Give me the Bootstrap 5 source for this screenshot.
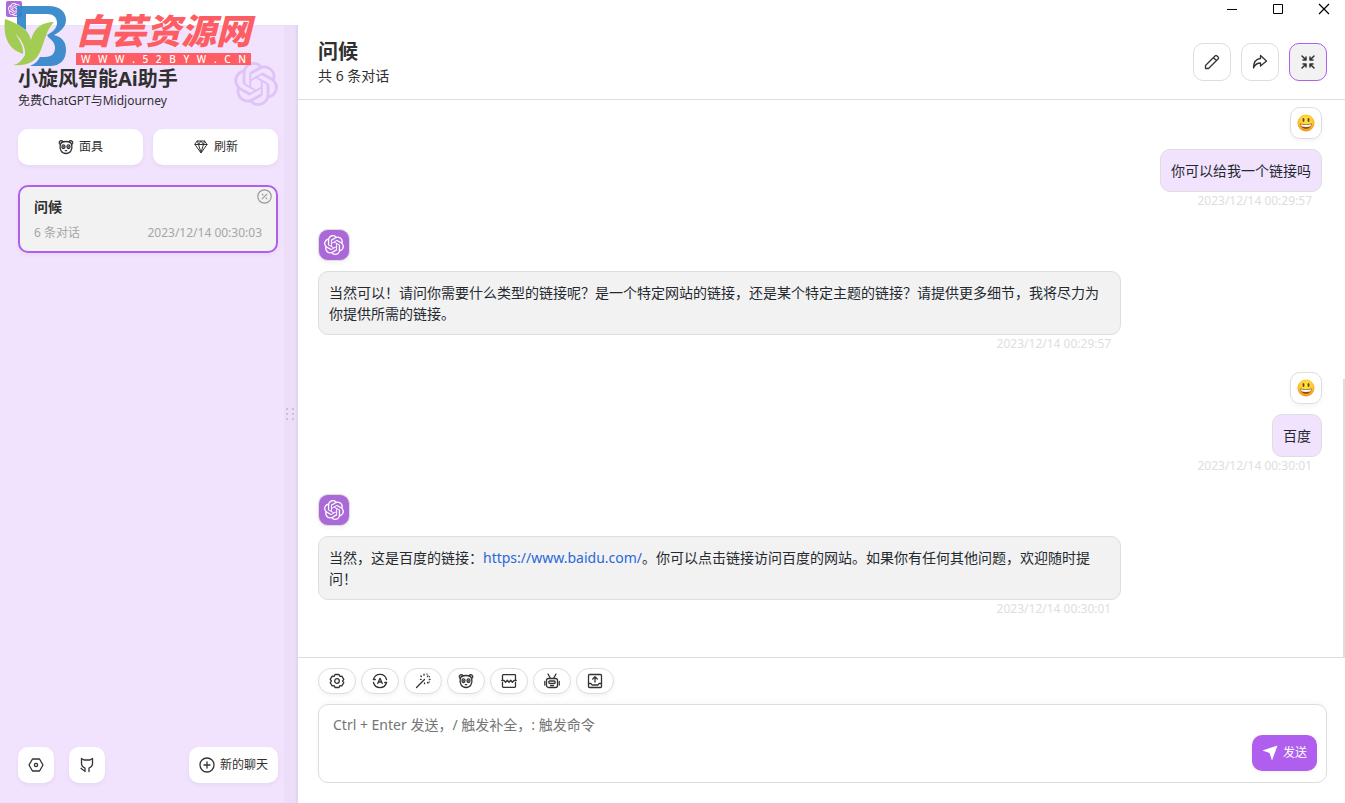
<!DOCTYPE html>
<html lang="zh-CN">
<head>
<meta charset="utf-8">
<meta name="viewport" content="width=device-width, initial-scale=1">
<title>小旋风智能Ai助手</title>
<link rel="stylesheet" href="https://cdn.jsdelivr.net/npm/bootstrap@5.3.0/dist/css/bootstrap.min.css">
<style>
:root{--brand:#af5eee;--soft:#f1e3fe;--line:#dedede;--ink:#303030}
body{font-family:"Noto Sans","Noto Sans CJK SC",sans-serif;font-size:14px;line-height:21px;color:var(--ink);background:#fff}
svg{display:block;flex:none}
.ico{width:16px;height:16px;fill:none;stroke:#333;stroke-width:1.3;stroke-linecap:round;stroke-linejoin:round}
.logo-shape{fill:currentColor}
/* window bar */
.titlebar{height:25px;padding-right:13px;gap:30px}
.titlebar button{width:16px;height:16px;color:#000}
.app-icon{width:16px;height:16px;left:6px;top:1px;background:#ab6bd9;border-radius:2px;color:#fff}
/* brand overlay */
.brand-mark{left:4px;top:5px;z-index:5;pointer-events:none}
.brand-name{font-family:"Noto Sans CJK SC",sans-serif;font-weight:900;font-style:italic;font-size:35px;line-height:48px;color:#fd5d63}
.brand-site{background:#fd5d63;color:#fff;font-size:10px;line-height:12px;font-weight:500;padding:0 5px}
/* sidebar */
.side{width:298px;padding:40px 20px 20px 18px;background:var(--soft);box-shadow:inset -2px 0 2px rgba(0,0,0,.05)}
.side-title{font-size:20px;line-height:28px;font-weight:700}
.side-sub{font-size:12px;line-height:16px}
.side-head{height:64px}
.side-logo{width:44px;height:44px;margin-top:-3px;color:#dfc3f7}
.side-duo{gap:10px}
.side-foot{gap:15px}
.soft-btn{--bs-btn-padding-x:10px;--bs-btn-padding-y:0;--bs-btn-bg:#fff;--bs-btn-color:#303030;--bs-btn-font-size:12px;--bs-btn-border-width:0;--bs-btn-border-radius:10px;--bs-btn-hover-bg:#f8f8f8;height:36px;box-shadow:0 2px 4px rgba(0,0,0,.05);gap:5px}
.soft-sq{width:36px}
.chat-item{height:68px;padding:9px 14px;border:2px solid var(--brand);border-radius:10px;background:#f2f2f2;box-shadow:0 2px 4px rgba(0,0,0,.05);margin-top:20px}
.chat-item .meta{font-size:12px;line-height:18px;color:#a6a6a6;margin-top:7px}
.close-x{right:4px;top:2px}
.grip{right:0;top:0;bottom:0;width:14px;background:rgba(0,0,0,.02)}
/* main */
.head{padding:0 18px 0 20px;height:75px;border-bottom:1px solid var(--line)}
.head h2{font-size:20px;line-height:26px;font-weight:700}
.head-tools{gap:10px}
.line-btn{--bs-btn-padding-x:0;--bs-btn-padding-y:0;--bs-btn-bg:#fff;--bs-btn-border-color:#dedede;--bs-btn-border-radius:10px;--bs-btn-hover-bg:#f3f3f3;width:38px;height:38px}
.line-btn.on{--bs-btn-bg:#f2f2f2;--bs-btn-border-color:var(--brand)}
.pill{--bs-btn-border-radius:20px;height:26px;box-shadow:0 2px 4px rgba(0,0,0,.05)}
.feed{padding:0 23px 20px 20px}
.face{width:32px;height:32px;border:1px solid var(--line);border-radius:10px;box-shadow:0 2px 4px rgba(0,0,0,.05);margin-bottom:10px}
.face.bot{background:#ab68d8;color:#fff}
.speech{max-width:80%}
.bubble{padding:10px;border:1px solid var(--line);border-radius:10px;background:#f2f2f2;color:#24292f}
.mine .bubble{background:var(--soft)}
.mine .speech{display:flex;flex-direction:column;align-items:flex-end}
.bubble a{color:#2a67d8;text-decoration:none}
.stamp{font-size:12px;line-height:17px;color:#dedede;padding-right:10px;margin-bottom:20px;text-align:right}
.thumb{right:0;bottom:0;width:2px;height:50%;background:#dedede}
.composer{padding:10px 18px 20px 20px;border-top:1px solid var(--line)}
.tools{gap:5px;margin-bottom:10px}
.ask{height:79px;padding:9px 90px 9px 14px;border:1px solid var(--line);border-radius:10px;resize:none;font-size:14px;line-height:21px;box-shadow:0 -2px 5px rgba(0,0,0,.03)}
.ask::placeholder{color:#757575}
.send{--bs-btn-bg:#af5eee;--bs-btn-color:#fff;--bs-btn-hover-bg:#9d4bdd;--bs-btn-hover-color:#fff;right:10px;bottom:12px}
</style>
</head>
<body class="vh-100 d-flex flex-column overflow-hidden">
<svg width="0" height="0" class="position-absolute" aria-hidden="true">
<symbol id="knot" viewBox="0 0 24 24"><path class="logo-shape" d="M22.2819 9.8211a5.9847 5.9847 0 0 0-.5157-4.9108 6.0462 6.0462 0 0 0-6.5098-2.9A6.0651 6.0651 0 0 0 4.9807 4.1818a5.9847 5.9847 0 0 0-3.9977 2.9 6.0462 6.0462 0 0 0 .7427 7.0966 5.98 5.98 0 0 0 .511 4.9107 6.051 6.051 0 0 0 6.5146 2.9001A5.9847 5.9847 0 0 0 13.2599 24a6.0557 6.0557 0 0 0 5.7718-4.2058 5.9894 5.9894 0 0 0 3.9977-2.9001 6.0557 6.0557 0 0 0-.7475-7.0729zm-9.022 12.6081a4.4755 4.4755 0 0 1-2.8764-1.0408l.1419-.0804 4.7783-2.7582a.7948.7948 0 0 0 .3927-.6813v-6.7369l2.02 1.1686a.071.071 0 0 1 .038.052v5.5826a4.504 4.504 0 0 1-4.4945 4.4944zm-9.6607-4.1254a4.4708 4.4708 0 0 1-.5346-3.0137l.142.0852 4.783 2.7582a.7712.7712 0 0 0 .7806 0l5.8428-3.3685v2.3324a.0804.0804 0 0 1-.0332.0615L9.74 19.9502a4.4992 4.4992 0 0 1-6.1408-1.6464zM2.3408 7.8956a4.485 4.485 0 0 1 2.3655-1.9728V11.6a.7664.7664 0 0 0 .3879.6765l5.8144 3.3543-2.0201 1.1685a.0757.0757 0 0 1-.071 0l-4.8303-2.7865A4.504 4.504 0 0 1 2.3408 7.872zm16.5963 3.8558L13.1038 8.364 15.1192 7.2a.0757.0757 0 0 1 .071 0l4.8303 2.7913a4.4944 4.4944 0 0 1-.6765 8.1042v-5.6772a.79.79 0 0 0-.407-.667zm2.0107-3.0231l-.142-.0852-4.7735-2.7818a.7759.7759 0 0 0-.7854 0L9.409 9.2297V6.8974a.0662.0662 0 0 1 .0284-.0615l4.8303-2.7866a4.4992 4.4992 0 0 1 6.6802 4.66zM8.3065 12.863l-2.02-1.1638a.0804.0804 0 0 1-.038-.0567V6.0742a4.4992 4.4992 0 0 1 7.3757-3.4537l-.142.0805L8.704 5.459a.7948.7948 0 0 0-.3927.6813zm1.0976-2.3654l2.602-1.4998 2.6069 1.4998v2.9994l-2.5974 1.4997-2.6067-1.4997Z"/></symbol>
<symbol id="mask" viewBox="0 0 16 16"><path d="M5 2.600C3.600.8.7 1.800 1.300 4.400c.2.700.7 1.100 1.200 1.200M11 2.600c1.400-1.800 4.300-.8 3.700 1.800-.2.700-.7 1.100-1.200 1.200M2.300 5.500C2.800 3.500 5 2.500 8 2.500s5.200 1 5.700 3c.5 2.500.3 4.500-.7 6.200-1 1.900-2.700 2.800-5 2.800s-4-.9-5-2.800c-1-1.700-1.200-3.700-.7-6.200z"/><ellipse cx="5.500" cy="7.700" rx="1.500" ry="1.800"/><ellipse cx="10.500" cy="7.700" rx="1.500" ry="1.800"/><path d="M5.600 7.700v.2M10.400 7.700v.2M7.300 11.600h1.400"/></symbol>
<symbol id="smile" viewBox="0 0 18 18"><radialGradient id="sun" cx=".5" cy=".35" r=".65"><stop offset="0" stop-color="#ffe94f"/><stop offset=".65" stop-color="#fdc52c"/><stop offset="1" stop-color="#ec8a18"/></radialGradient><circle cx="9" cy="9" r="8.500" fill="url(#sun)"/><ellipse cx="6.500" cy="5.900" rx="1" ry="2" fill="#67400d"/><ellipse cx="11.500" cy="5.900" rx="1" ry="2" fill="#67400d"/><path d="M3.200 9.500c3.800.9 7.800.9 11.600 0-.3 3.500-2.700 5.300-5.800 5.300s-5.500-1.800-5.800-5.300z" fill="#8a4d12"/><path d="M3.800 10.200c3.500.7 6.900.7 10.400 0-.2 1-.5 1.700-1 2.300-2.800.5-5.600.5-8.400 0-.5-.6-.8-1.300-1-2.300z" fill="#fff"/></symbol>
</svg>

<header class="titlebar d-flex align-items-start justify-content-end position-relative flex-shrink-0">
  <span class="app-icon position-absolute d-flex align-items-center justify-content-center"><svg width="13" height="13"><use href="#knot"/></svg></span>
  <button class="btn p-0 border-0" aria-label="最小化"><svg width="16" height="18" stroke="#000"><path d="M3 9.500h10"/></svg></button>
  <button class="btn p-0 border-0" aria-label="最大化"><svg width="16" height="18" fill="none" stroke="#000"><path d="M3.500 4.500h9v9h-9z"/></svg></button>
  <button class="btn p-0 border-0" aria-label="关闭"><svg width="16" height="18" stroke="#000" stroke-width="1.200"><path d="M3 4l10 10M13 4L3 14"/></svg></button>
</header>

<div class="brand-mark position-absolute d-flex">
  <svg width="72" height="62" viewBox="0 0 72 62"><path fill="#2c82c6" fill-opacity=".9" d="M13 1H44C56 1 62 7 62 15C62 22 56 27 50 30C58 32 62 37 62 45C62 55 56 61 46 61H26C31 59 34 56 36 52H41C48 52 51 48 51 43C51 38 48 35 45 33L43 30C49 27 53 23 53 18C53 12 49 9 43 9H22V25L13 19Z"/><path fill="#a3cd52" d="M1 14C14 19 24 23 27 35C30 23 38 17 50 17C42 25 41 36 36 47C31 58 22 61 9 60C15 59 18 55 21 50C22 42 17 34 11 28C16 36 20 42 19 49C3 44-1 30 1 14Z"/></svg>
  <div>
    <div class="brand-name">白芸资源网</div>
    <div class="brand-site d-flex justify-content-between"><span>W</span><span>W</span><span>W</span><span>.</span><span>5</span><span>2</span><span>B</span><span>Y</span><span>W</span><span>.</span><span>C</span><span>N</span></div>
  </div>
</div>

<div class="d-flex flex-grow-1 overflow-hidden">
  <aside class="side position-relative d-flex flex-column flex-shrink-0">
    <div class="side-head d-flex justify-content-between">
      <div>
        <h1 class="side-title mb-0">小旋风智能Ai助手</h1>
        <div class="side-sub">免费ChatGPT与Midjourney</div>
      </div>
      <svg class="side-logo"><use href="#knot"/></svg>
    </div>
    <div class="side-duo d-flex">
      <button class="btn soft-btn flex-fill d-flex align-items-center justify-content-center"><svg class="ico"><use href="#mask"/></svg>面具</button>
      <button class="btn soft-btn flex-fill d-flex align-items-center justify-content-center"><svg class="ico" viewBox="0 0 16 16"><path stroke-width="1" d="M4.500 2h7L14 5.500 8 14 2 5.500zM2 5.500h12M5.500 5.500L8 13.500l2.500-8M4.500 2l1 3.500L8 2l2.500 3.500 1-3.500"/></svg>刷新</button>
    </div>
    <div class="chat-item position-relative">
      <div class="fw-bold">问候</div>
      <div class="meta d-flex justify-content-between"><span>6 条对话</span><span>2023/12/14 00:30:03</span></div>
      <button class="close-x btn p-0 border-0 position-absolute" aria-label="删除"><svg width="15" height="15" fill="none" stroke="#999" stroke-width="1.200"><circle cx="7.500" cy="7.500" r="6.700"/><path d="M4.800 10.200l5.400-5.400M4.900 4.900l1.500 1.500M8.600 8.600l1.500 1.500"/></svg></button>
    </div>
    <div class="side-foot d-flex mt-auto">
      <button class="btn soft-btn soft-sq p-0 d-flex align-items-center justify-content-center" aria-label="设置"><svg class="ico" viewBox="0 0 16 16"><path d="M4.500 2h7L15 8l-3.500 6h-7L1 8z"/><circle cx="8" cy="8" r="1.600"/></svg></button>
      <button class="btn soft-btn soft-sq p-0 d-flex align-items-center justify-content-center" aria-label="GitHub"><svg class="ico" viewBox="0 0 16 16"><path d="M6 14.500V11C3.500 10 2.500 8.500 2.500 6.500V1.500L5 3h6l2.500-1.500v5c0 2-1 3.500-3.500 4.500v3.500M6 13.500c-2.200.4-2.400-1.200-4-2.200"/></svg></button>
      <button class="btn soft-btn d-flex align-items-center ms-auto"><svg class="ico" viewBox="0 0 16 16"><circle cx="8" cy="8" r="7"/><path d="M8 5v6M5 8h6"/></svg>新的聊天</button>
    </div>
    <div class="grip position-absolute d-flex align-items-center"><svg width="12" height="14" fill="#cdbcdc"><path d="M2 1h2v2H2zM8 1h2v2H8zM2 6h2v2H2zM8 6h2v2H8zM2 11h2v2H2zM8 11h2v2H8z"/></svg></div>
  </aside>

  <main class="flex-grow-1 d-flex flex-column overflow-hidden">
    <div class="head d-flex align-items-center justify-content-between flex-shrink-0">
      <div><h2 class="mb-0">问候</h2><div>共 6 条对话</div></div>
      <div class="head-tools d-flex">
        <button class="btn line-btn d-flex align-items-center justify-content-center" aria-label="编辑"><svg class="ico" viewBox="0 0 16 16"><path d="M1.500 14.500v-3L11.300 1.700q.7-.6 1.400 0l1.600 1.600q.6.700 0 1.400L4.500 14.500zM9.500 3.700l2.800 2.800"/></svg></button>
        <button class="btn line-btn d-flex align-items-center justify-content-center" aria-label="分享"><svg class="ico" viewBox="0 0 16 16"><path d="M8.500 1.500l6 5.500-6 5V9C5.500 9 3 10.500 1.500 14 1.500 8.500 4 5 8.500 4.500z"/></svg></button>
        <button class="btn line-btn on d-flex align-items-center justify-content-center" aria-label="收缩"><svg class="ico" viewBox="0 0 16 16"><path stroke-width="1.500" d="M2 2l3.500 3.500M6 3v3H3M14 2l-3.500 3.500M10 3v3h3M2 14l3.500-3.500M3 10h3v3M14 14l-3.500-3.500M13 10h-3v3"/></svg></button>
      </div>
    </div>

    <section class="feed position-relative flex-grow-1 d-flex flex-column justify-content-end overflow-hidden">
      <article class="mine d-flex flex-column align-items-end">
        <div class="face d-flex align-items-center justify-content-center"><svg width="18" height="18"><use href="#smile"/></svg></div>
        <div class="speech">
          <div class="bubble">你可以给我一个链接吗</div>
          <div class="stamp">2023/12/14 00:29:57</div>
        </div>
      </article>
      <article class="d-flex flex-column align-items-start">
        <div class="face bot d-flex align-items-center justify-content-center"><svg width="20" height="20"><use href="#knot"/></svg></div>
        <div class="speech">
          <div class="bubble">当然可以！请问你需要什么类型的链接呢？是一个特定网站的链接，还是某个特定主题的链接？请提供更多细节，我将尽力为你提供所需的链接。</div>
          <div class="stamp">2023/12/14 00:29:57</div>
        </div>
      </article>
      <article class="mine d-flex flex-column align-items-end">
        <div class="face d-flex align-items-center justify-content-center"><svg width="18" height="18"><use href="#smile"/></svg></div>
        <div class="speech">
          <div class="bubble">百度</div>
          <div class="stamp">2023/12/14 00:30:01</div>
        </div>
      </article>
      <article class="d-flex flex-column align-items-start">
        <div class="face bot d-flex align-items-center justify-content-center"><svg width="20" height="20"><use href="#knot"/></svg></div>
        <div class="speech">
          <div class="bubble">当然，这是百度的链接：<a href="https://www.baidu.com/">https://www.baidu.com/</a>。你可以点击链接访问百度的网站。如果你有任何其他问题，欢迎随时提问！</div>
          <div class="stamp">2023/12/14 00:30:01</div>
        </div>
      </article>
      <div class="thumb position-absolute"></div>
    </section>

    <footer class="composer flex-shrink-0">
      <div class="tools d-flex">
        <button class="btn line-btn pill d-flex align-items-center justify-content-center" aria-label="对话设置"><svg class="ico" viewBox="0 0 16 16"><path d="M6 1.500h4l.8 1.800 2-.2 2 3.300L13.600 8l1.200 1.600-2 3.300-2-.2-.8 1.800H6l-.8-1.800-2 .2-2-3.300L2.400 8 1.200 6.400l2-3.300 2 .2z"/><circle cx="8" cy="8" r="2.300"/></svg></button>
        <button class="btn line-btn pill d-flex align-items-center justify-content-center" aria-label="主题"><svg class="ico" viewBox="0 0 16 16"><path d="M1.500 6.500a6.700 6.700 0 0 1 13 0M14.500 9.500a6.700 6.700 0 0 1-13 0M1.300 6.500h2M12.700 9.500h2M5.700 10.500L8 5.300l2.300 5.200M6.500 9h3"/></svg></button>
        <button class="btn line-btn pill d-flex align-items-center justify-content-center" aria-label="快捷指令"><svg class="ico" viewBox="0 0 16 16"><path d="M1.500 14.500L9.500 6.500M9 1.200v1M12.500 3.500l.5-.5M14.300 6.500h.7M5.800 3l.5.500M12.500 9.500l.5.500M5.500 6.300h.7M12 1.200h.1M14.500 3.700v.1M9.500 10v.7M14.200 9v.1"/></svg></button>
        <button class="btn line-btn pill d-flex align-items-center justify-content-center" aria-label="面具"><svg class="ico"><use href="#mask"/></svg></button>
        <button class="btn line-btn pill d-flex align-items-center justify-content-center" aria-label="清除聊天"><svg class="ico" viewBox="0 0 16 16"><path d="M1.500 7V2.500q0-.8.800-.8h11.400q.8 0 .8.800V7M1.500 9.500v4q0 .8.800.8h11.400q.8 0 .8-.8v-4M.8 7.500H3l1.600 1.700L6.300 7.300 8 9.200l1.700-1.900 1.700 1.900L13 7.500h2.200"/></svg></button>
        <button class="btn line-btn pill d-flex align-items-center justify-content-center" aria-label="模型"><svg class="ico" viewBox="0 0 16 16"><rect x="2.500" y="5.500" width="11" height="9" rx="2"/><path d="M6.500 5.500L4 1M9.500 5.500L12 1M.8 8.500V12M15.200 8.500V12M6 8h4q1.200 0 1.200 1.200T10 10.500H6q-1.200 0-1.200-1.300T6 8M6.500 12.600h3"/></svg></button>
        <button class="btn line-btn pill d-flex align-items-center justify-content-center" aria-label="上传"><svg class="ico" viewBox="0 0 16 16"><rect x="1.500" y="1.500" width="13" height="13" rx="1"/><path d="M1.500 10.500H4l1 1.500h6l1-1.500h2.500M8 9V4M5.700 6L8 3.800 10.300 6"/></svg></button>
      </div>
      <div class="position-relative">
        <textarea class="ask form-control" aria-label="消息" placeholder="Ctrl + Enter 发送，/ 触发补全，: 触发命令"></textarea>
        <button class="send btn soft-btn position-absolute d-flex align-items-center"><svg width="16" height="16" fill="#fff"><path d="M.500 5.500L15.500.500 10 15.500 7.500 8z"/></svg>发送</button>
      </div>
    </footer>
  </main>
</div>
<script src="https://cdn.jsdelivr.net/npm/bootstrap@5.3.0/dist/js/bootstrap.bundle.min.js"></script>
</body>
</html>
